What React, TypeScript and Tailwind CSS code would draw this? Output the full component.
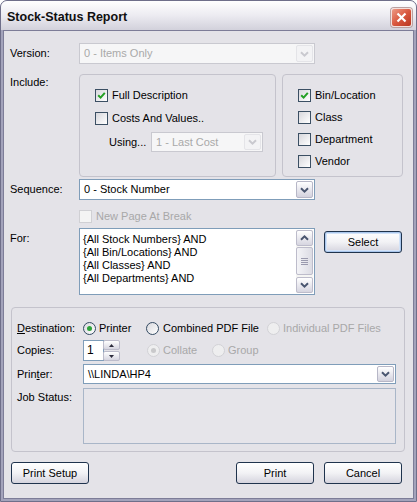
import React from 'react';

const Chevron = ({ dir = 'down', disabled }: { dir?: 'up' | 'down'; disabled?: boolean }) => (
  <svg width="9" height="6" viewBox="0 0 9 6">
    <path
      d={dir === 'down' ? 'M1 1.2 L4.5 4.6 L8 1.2' : 'M1 4.8 L4.5 1.4 L8 4.8'}
      fill="none"
      stroke={disabled ? '#c9c9cf' : '#4a5670'}
      strokeWidth="2"
    />
  </svg>
);

const DropButton = ({ disabled }: { disabled?: boolean }) => (
  <div
    className={`w-[17px] h-full shrink-0 flex items-center justify-center rounded-[2px] border ${
      disabled ? 'border-[#e4e4e8] bg-[#f3f3f5]' : 'border-[#b7b7c7] bg-gradient-to-b from-white to-[#d3d2de]'
    }`}
  >
    <Chevron disabled={disabled} />
  </div>
);

const Combo = ({ value, className, disabled }: { value: string; className: string; disabled?: boolean }) => (
  <div
    className={`flex items-stretch p-[1px] border ${
      disabled ? 'border-[#c9c9d0] bg-[#f6f6f7] text-[#a9a9a9]' : 'border-[#7f9db9] bg-white text-black'
    } ${className}`}
  >
    <div className="flex-1 flex items-center pl-[3px] whitespace-nowrap overflow-hidden">{value}</div>
    <DropButton disabled={disabled} />
  </div>
);

const Check = ({ checked, disabled }: { checked?: boolean; disabled?: boolean }) => (
  <div
    className={`w-[13px] h-[13px] shrink-0 border flex items-center justify-center ${
      disabled ? 'border-[#d0d0d4] bg-[#f4f4f4]' : 'border-[#3b4f63] bg-gradient-to-br from-[#d7d7dc] to-white'
    }`}
  >
    {checked && (
      <svg width="9" height="9" viewBox="0 0 9 9">
        <path d="M1.2 4.2 L3.6 6.6 L7.8 1.8" fill="none" stroke="#23a023" strokeWidth="2" />
      </svg>
    )}
  </div>
);

const Radio = ({ checked, disabled }: { checked?: boolean; disabled?: boolean }) => (
  <div
    className={`w-[13px] h-[13px] shrink-0 rounded-full border flex items-center justify-center ${
      disabled ? 'border-[#d2d2d6] bg-[#eeeeef]' : 'border-[#334a62] bg-gradient-to-br from-[#d9d9de] to-white'
    }`}
  >
    {checked && (
      <div className={`w-[5px] h-[5px] rounded-full ${disabled ? 'bg-[#c9c9cb]' : 'bg-[#2ea33a]'}`} />
    )}
  </div>
);

const Btn = ({ label, focused }: { label: string; focused?: boolean }) => (
  <div
    className={`w-[78px] h-[22px] rounded-[3px] border border-[#1f334d] bg-gradient-to-b from-white via-[#f2f2f5] to-[#d5d4de] flex items-center justify-center text-black ${
      focused ? 'shadow-[inset_0_0_0_1px_#a9c6ec,inset_0_0_0_2px_#d3e3f8]' : ''
    }`}
  >
    {label}
  </div>
);

const ScrollBtn = ({ dir }: { dir: 'up' | 'down' }) => (
  <div className="h-[16px] rounded-[2px] border border-[#bdbccb] bg-gradient-to-b from-white to-[#d6d5e0] flex items-center justify-center">
    <Chevron dir={dir} />
  </div>
);

export default function App() {
  return (
    <div className="w-[417px] h-[502px] flex flex-col rounded-t-[7px] border border-[#6f6f8a] bg-[#a3a3bb] overflow-hidden font-['Liberation_Sans',Arial,sans-serif] text-[11px] leading-[13px] text-black">
      {/* title bar */}
      <div className="h-[29px] shrink-0 flex items-center justify-between pt-[3px] pl-[6px] pr-[4px] bg-gradient-to-b from-white via-[#ecebf1] to-[#d2d1db]">
        <span className="font-bold text-[12.5px] text-[#101010]">Stock-Status Report</span>
        <div className="w-[21px] h-[19px] rounded-[3px] border border-[#f4e0dc] bg-gradient-to-br from-[#ec9a86] via-[#d9583f] to-[#b8351f] flex items-center justify-center shadow-[0_0_0_1px_#b9a0a0]">
          <svg width="11" height="11" viewBox="0 0 11 11">
            <path d="M1.5 1.5 L9.5 9.5 M9.5 1.5 L1.5 9.5" stroke="white" strokeWidth="2.2" />
          </svg>
        </div>
      </div>

      {/* client */}
      <div className="flex-1 mx-[2px] mb-[2px] border border-[#7d7d98] bg-[#e4e3e8] flex flex-col pl-[6px]">
        {/* Version */}
        <div className="flex items-center mt-[12px] h-[21px]">
          <span className="w-[69px]">Version:</span>
          <Combo value="0 - Items Only" disabled className="w-[236px] h-[21px]" />
        </div>

        {/* Include */}
        <div className="flex mt-[10px] h-[103px]">
          <span className="w-[69px] pt-[2px]">Include:</span>
          <div className="w-[197px] h-full rounded-[4px] border border-[#c4c3cc] pl-[15px] pt-[14px] flex flex-col">
            <div className="flex items-center h-[13px]">
              <Check checked />
              <span className="ml-[4px]">Full Description</span>
            </div>
            <div className="flex items-center h-[13px] mt-[10px]">
              <Check />
              <span className="ml-[4px]">Costs And Values..</span>
            </div>
            <div className="flex items-center h-[20px] mt-[7px] pl-[14px]">
              <span className="w-[42px]">Using...</span>
              <Combo value="1 - Last Cost" disabled className="w-[112px] h-[20px]" />
            </div>
          </div>
          <div className="w-[121px] h-full ml-[6px] rounded-[4px] border border-[#c4c3cc] pl-[15px] pt-[14px] flex flex-col gap-[9px]">
            {[
              { label: 'Bin/Location', checked: true },
              { label: 'Class' },
              { label: 'Department' },
              { label: 'Vendor' },
            ].map((item) => (
              <div key={item.label} className="flex items-center h-[13px]">
                <Check checked={item.checked} />
                <span className="ml-[4px]">{item.label}</span>
              </div>
            ))}
          </div>
        </div>

        {/* Sequence */}
        <div className="flex items-center mt-[2px] h-[21px]">
          <span className="w-[69px]">Sequence:</span>
          <Combo value="0 - Stock Number" className="w-[236px] h-[21px]" />
        </div>

        {/* New page */}
        <div className="flex items-center mt-[10px] h-[13px] pl-[69px]">
          <Check disabled />
          <span className="ml-[4px] text-[#a8a8a8]">New Page At Break</span>
        </div>

        {/* For */}
        <div className="flex mt-[5px] h-[67px]">
          <span className="w-[69px] pt-[4px]">For:</span>
          <div className="w-[236px] h-full border border-[#7f9db9] bg-white flex p-[1px]">
            <div className="flex-1 pl-[2px] pt-[3px] flex flex-col">
              <span>{'{All Stock Numbers} AND'}</span>
              <span>{'{All Bin/Locations} AND'}</span>
              <span>{'{All Classes} AND'}</span>
              <span>{'{All Departments} AND'}</span>
            </div>
            <div className="w-[17px] h-full flex flex-col bg-[#f5f5f3]">
              <ScrollBtn dir="up" />
              <div className="h-[28px] mt-[1px] rounded-[2px] border border-[#bdbccb] bg-gradient-to-r from-[#f4f4f7] to-[#dcdce4] flex flex-col items-center justify-center gap-[1px]">
                {[0, 1, 2, 3].map((i) => (
                  <div key={i} className="w-[7px] h-[1px] bg-[#9a9aae]" />
                ))}
              </div>
              <div className="flex-1" />
              <ScrollBtn dir="down" />
            </div>
          </div>
          <div className="ml-[9px] mt-[3px]">
            <Btn label="Select" focused />
          </div>
        </div>

        {/* Output group */}
        <div className="mt-[12px] ml-[1px] w-[394px] h-[145px] rounded-[4px] border border-[#c4c3cc] pt-[14px] pl-[5px] flex flex-col">
          <div className="flex items-center h-[13px]">
            <span className="w-[66px]">
              <span className="underline">D</span>estination:
            </span>
            <div className="w-[63px] flex items-center">
              <Radio checked />
              <span className="ml-[3px]">Printer</span>
            </div>
            <div className="w-[121px] flex items-center">
              <Radio />
              <span className="ml-[4px]">Combined PDF File</span>
            </div>
            <div className="flex items-center">
              <Radio disabled />
              <span className="ml-[3px] text-[#a8a8a8]">Individual PDF Files</span>
            </div>
          </div>

          <div className="flex items-center h-[21px] mt-[5px]">
            <span className="w-[66px]">Copies:</span>
            <div className="flex h-full w-[37px]">
              <div className="w-[21px] h-full border border-[#7f9db9] bg-white pl-[3px] flex items-center text-[12px]">1</div>
              <div className="flex-1 flex flex-col gap-[1px] ml-[-1px]">
                <div className="flex-1 rounded-[2px] border border-[#bdbccb] bg-gradient-to-b from-white to-[#d6d5e0] flex items-center justify-center">
                  <svg width="5" height="3" viewBox="0 0 5 3">
                    <path d="M0 3 L2.5 0 L5 3 Z" fill="#2c2c3c" />
                  </svg>
                </div>
                <div className="flex-1 rounded-[2px] border border-[#bdbccb] bg-gradient-to-b from-white to-[#d6d5e0] flex items-center justify-center">
                  <svg width="5" height="3" viewBox="0 0 5 3">
                    <path d="M0 0 L2.5 3 L5 0 Z" fill="#2c2c3c" />
                  </svg>
                </div>
              </div>
            </div>
            <div className="ml-[27px] w-[65px] flex items-center text-[#a8a8a8]">
              <Radio checked disabled />
              <span className="ml-[3px]">Collate</span>
            </div>
            <div className="flex items-center text-[#a8a8a8]">
              <Radio disabled />
              <span className="ml-[3px]">Group</span>
            </div>
          </div>

          <div className="flex items-center h-[20px] mt-[3px]">
            <span className="w-[66px]">
              Prin<span className="underline">t</span>er:
            </span>
            <Combo value="\\LINDA\HP4" className="w-[313px] h-[20px]" />
          </div>

          <div className="flex h-[56px] mt-[4px]">
            <span className="w-[66px] pt-[3px]">Job Status:</span>
            <div className="w-[313px] h-full border border-[#a9b6c8] bg-[#e6e5ea]" />
          </div>
        </div>

        {/* Buttons */}
        <div className="flex mt-[10px] pl-[1px] pr-[11px]">
          <Btn label="Print Setup" />
          <div className="flex-1" />
          <Btn label="Print" />
          <div className="ml-[10px]">
            <Btn label="Cancel" />
          </div>
        </div>
      </div>
    </div>
  );
}
